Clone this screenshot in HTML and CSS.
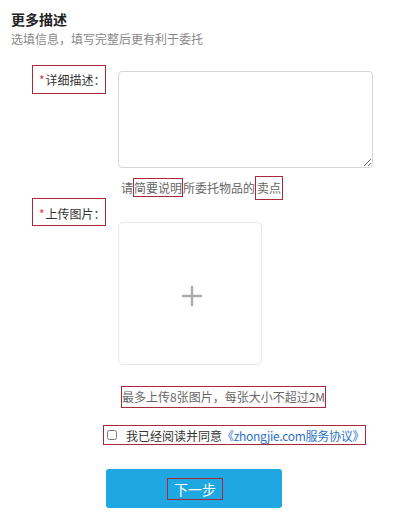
FILE: index.html
```html
<!DOCTYPE html>
<html>
<head>
  <meta charset="utf-8">
  <title>更多描述</title>
  <link rel="stylesheet" href="styles.css">
</head>
<body>
  <div class="page">
    <!-- Section heading -->
    <h3 class="title">更多描述</h3>
    <p class="sub">选填信息，填写完整后更有利于委托</p>

    <!-- Description row -->
    <div class="row">
      <div class="label"><span class="mark label-mark"><i>*</i>详细描述：</span></div>
      <div class="field">
        <textarea class="desc"></textarea>
        <p class="tip">请<span class="mark">简要说明</span>所委托物品的<span class="mark tall">卖点</span></p>
      </div>
    </div>

    <!-- Upload row -->
    <div class="row row-upload">
      <div class="label"><span class="mark label-mark"><i>*</i>上传图片：</span></div>
      <div class="field">
        <div class="upload">
          <svg width="20" height="20" viewBox="0 0 20 20">
            <path d="M10 0v20M0 10h20" stroke="#aaa" stroke-width="2.4" fill="none"/>
          </svg>
        </div>
        <p class="tip limit"><span class="mark">最多上传8张图片，每张大小不超过2M</span></p>
      </div>
    </div>

    <!-- Agreement -->
    <label class="agree mark">
      <input type="checkbox">
      <span>我已经阅读并同意<a href="#">《zhongjie.com服务协议》</a></span>
    </label>

    <button class="btn-next"><span class="mark">下一步</span></button>
  </div>
</body>
</html>
```

FILE: styles.css
```css
body {
  margin: 0;
  background: #fff;
  font-family: "Microsoft YaHei", "Noto Sans CJK SC", sans-serif;
  color: #333;
  font-size: 12px;
}
.page {
  padding: 9px 0 0 11px;
}
.title {
  margin: 0;
  font-size: 14px;
  line-height: 20px;
  font-weight: bold;
  color: #222;
}
.sub {
  margin: 1px 0 0;
  line-height: 18px;
  color: #888;
}
/* red annotation boxes */
.mark {
  border: 1px solid #a8293a;
}
.row {
  display: flex;
  align-items: flex-start;
  margin-top: 23px;
}
.row-upload {
  margin-top: -2px;
}
.label {
  width: 95px;
  flex: none;
  display: flex;
  justify-content: flex-end;
}
.label-mark {
  display: block;
  box-sizing: border-box;
  width: 74px;
  height: 29px;
  line-height: 27px;
  padding-left: 6px;
  margin-top: -6px;
  color: #333;
  white-space: nowrap;
}
.row-upload .label-mark {
  height: 28px;
  line-height: 30px;
  margin-top: 0;
}
.label i {
  font-style: normal;
  color: #e4393c;
  margin-right: 1px;
}
.field {
  margin-left: 12px;
}
.desc {
  display: block;
  box-sizing: border-box;
  width: 255px;
  height: 97px;
  margin: 0;
  border: 1px solid #d6d6d6;
  border-radius: 4px;
  resize: vertical;
}
.tip {
  margin: 8px 0 0 3px;
  line-height: 20px;
  color: #666;
}
.tip .tall {
  display: inline-block;
  line-height: 20px;
  padding: 1px;
}
.upload {
  box-sizing: border-box;
  width: 144px;
  height: 143px;
  margin-top: 24px;
  border: 1px solid #e6e6e6;
  border-radius: 5px;
  display: flex;
  align-items: center;
  justify-content: center;
}
.upload svg {
  margin: 4px 0 0 4px;
}
.limit {
  margin-top: 21px;
}
.limit .mark {
  display: inline-block;
  line-height: 20px;
}
.agree {
  display: inline-flex;
  align-items: center;
  height: 18px;
  margin: 17px 0 0 92px;
  padding-right: 1px;
  color: #333;
}
.agree input {
  width: 10px;
  height: 10px;
  margin: 0 9px 0 3px;
}
.agree a {
  color: #2b72c7;
  text-decoration: none;
  letter-spacing: -0.3px;
}
.btn-next {
  display: flex;
  align-items: center;
  justify-content: center;
  width: 176px;
  height: 39px;
  margin: 24px 0 0 95px;
  border: none;
  border-radius: 3px;
  background: #1fa7e1;
  color: #fff;
  font-family: inherit;
  font-size: 14px;
  cursor: pointer;
}
.btn-next .mark {
  display: inline-block;
  width: 54px;
  line-height: 20px;
  margin-left: 2px;
}
```
